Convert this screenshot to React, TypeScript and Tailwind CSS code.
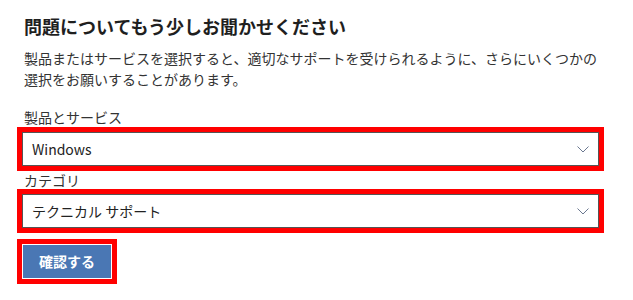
const font = { fontFamily: '"Noto Sans CJK JP", "Noto Sans", sans-serif' };

function Chevron() {
  return (
    <svg width="12" height="7" viewBox="0 0 12 7" fill="none" className="shrink-0">
      <path d="M0.5 0.5 L6 6 L11.5 0.5" stroke="#6b7890" strokeWidth="1" />
    </svg>
  );
}

function SelectBox({ value }: { value: string }) {
  return (
    <div className="w-[587px] border-[5px] border-[#ff0000]">
      <div className="flex h-[34px] items-center justify-between border border-[#555555] bg-white pl-[9px] pr-[9px] text-[14px] text-[#222222]">
        <span>{value}</span>
        <Chevron />
      </div>
    </div>
  );
}

export default function App() {
  return (
    <div style={font} className="h-[300px] w-[633px] bg-white pl-[17px] pt-[12px]">
      <h1 className="pl-[7px] text-[18px] font-bold leading-[28px] text-[#1f1f1f]">
        問題についてもう少しお聞かせください
      </h1>
      <p className="mt-[8px] w-[587px] pl-[7px] pr-[6px] text-[14px] leading-[21px] text-[#333333]">
        製品またはサービスを選択すると、適切なサポートを受けられるように、さらにいくつかの選択をお願いすることがあります。
      </p>
      <div className="mt-[17px] pl-[7px] text-[14px] leading-[20px] text-[#333333]">製品とサービス</div>
      <SelectBox value="Windows" />
      <div className="mt-[1px] pl-[7px] text-[14px] leading-[17px] text-[#333333]">カテゴリ</div>
      <SelectBox value="テクニカル サポート" />
      <div className="mt-[6px] w-[100px] border-[5px] border-[#ff0000]">
        <div className="border border-white">
          <button className="flex h-[33px] w-full items-center justify-center bg-[#4a77b4] text-[14px] font-bold text-white">
            確認する
          </button>
        </div>
      </div>
    </div>
  );
}
